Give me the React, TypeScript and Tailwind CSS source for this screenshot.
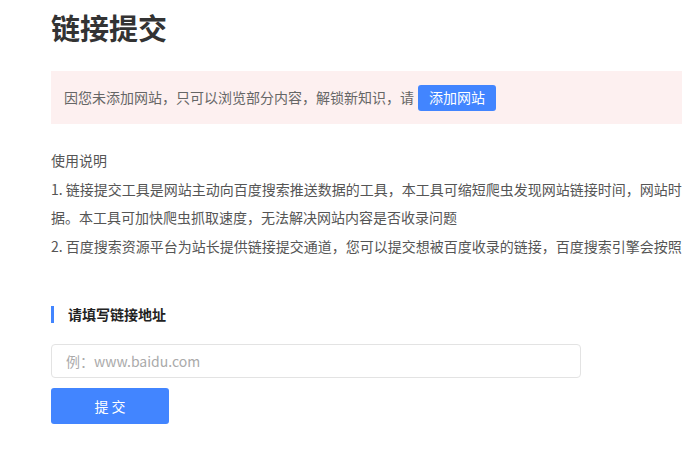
const FONT = { fontFamily: '"Microsoft YaHei", "Noto Sans CJK SC", "Liberation Sans", sans-serif' };

// only the part that fits in the window is kept; the page is wider than the view
const LINES = [
  "1. 链接提交工具是网站主动向百度搜索推送数据的工具，本工具可缩短爬虫发现网站链接时间，网站时",
  "据。本工具可加快爬虫抓取速度，无法解决网站内容是否收录问题",
  "2. 百度搜索资源平台为站长提供链接提交通道，您可以提交想被百度收录的链接，百度搜索引擎会按照",
];

export default function App() {
  return (
    <div className="h-[451px] w-[682px] overflow-hidden bg-white" style={FONT}>
      <div className="w-[1100px] pl-[51px] pt-[11px]">
        <h1 className="text-[29px] font-bold leading-[33px] text-[#333]">链接提交</h1>

        <div className="mt-[27px] flex h-[53px] items-center bg-[#fdf0f0] pl-[13px] text-[14px] text-[#666]">
          <span>因您未添加网站，只可以浏览部分内容，解锁新知识，请</span>
          <button className="ml-[4px] h-[26px] w-[78px] rounded-[3px] bg-[#4285ff] text-[14px] text-white">
            添加网站
          </button>
        </div>

        <div className="mt-[22px] text-[14px] leading-[28.5px] text-[#555]">
          <div>使用说明</div>
          {LINES.map((l) => (
            <div key={l} className="whitespace-nowrap">
              {l}
            </div>
          ))}
        </div>

        <div className="mt-[46px] flex h-[17px] items-center">
          <div className="h-[17px] w-[3px] bg-[#4285ff]" />
          <span className="ml-[14px] text-[14px] font-bold text-[#222]">请填写链接地址</span>
        </div>

        <input
          className="mt-[21px] block h-[34px] w-[530px] rounded-[4px] border border-[#e3e3e3] px-[14px] text-[14px] text-[#333] outline-none placeholder:text-[#aaa]"
          placeholder="例：www.baidu.com"
        />

        <button className="mt-[10px] block h-[36px] w-[118px] rounded-[3px] bg-[#4285ff] text-[14px] text-white">
          提 交
        </button>
      </div>
    </div>
  );
}
